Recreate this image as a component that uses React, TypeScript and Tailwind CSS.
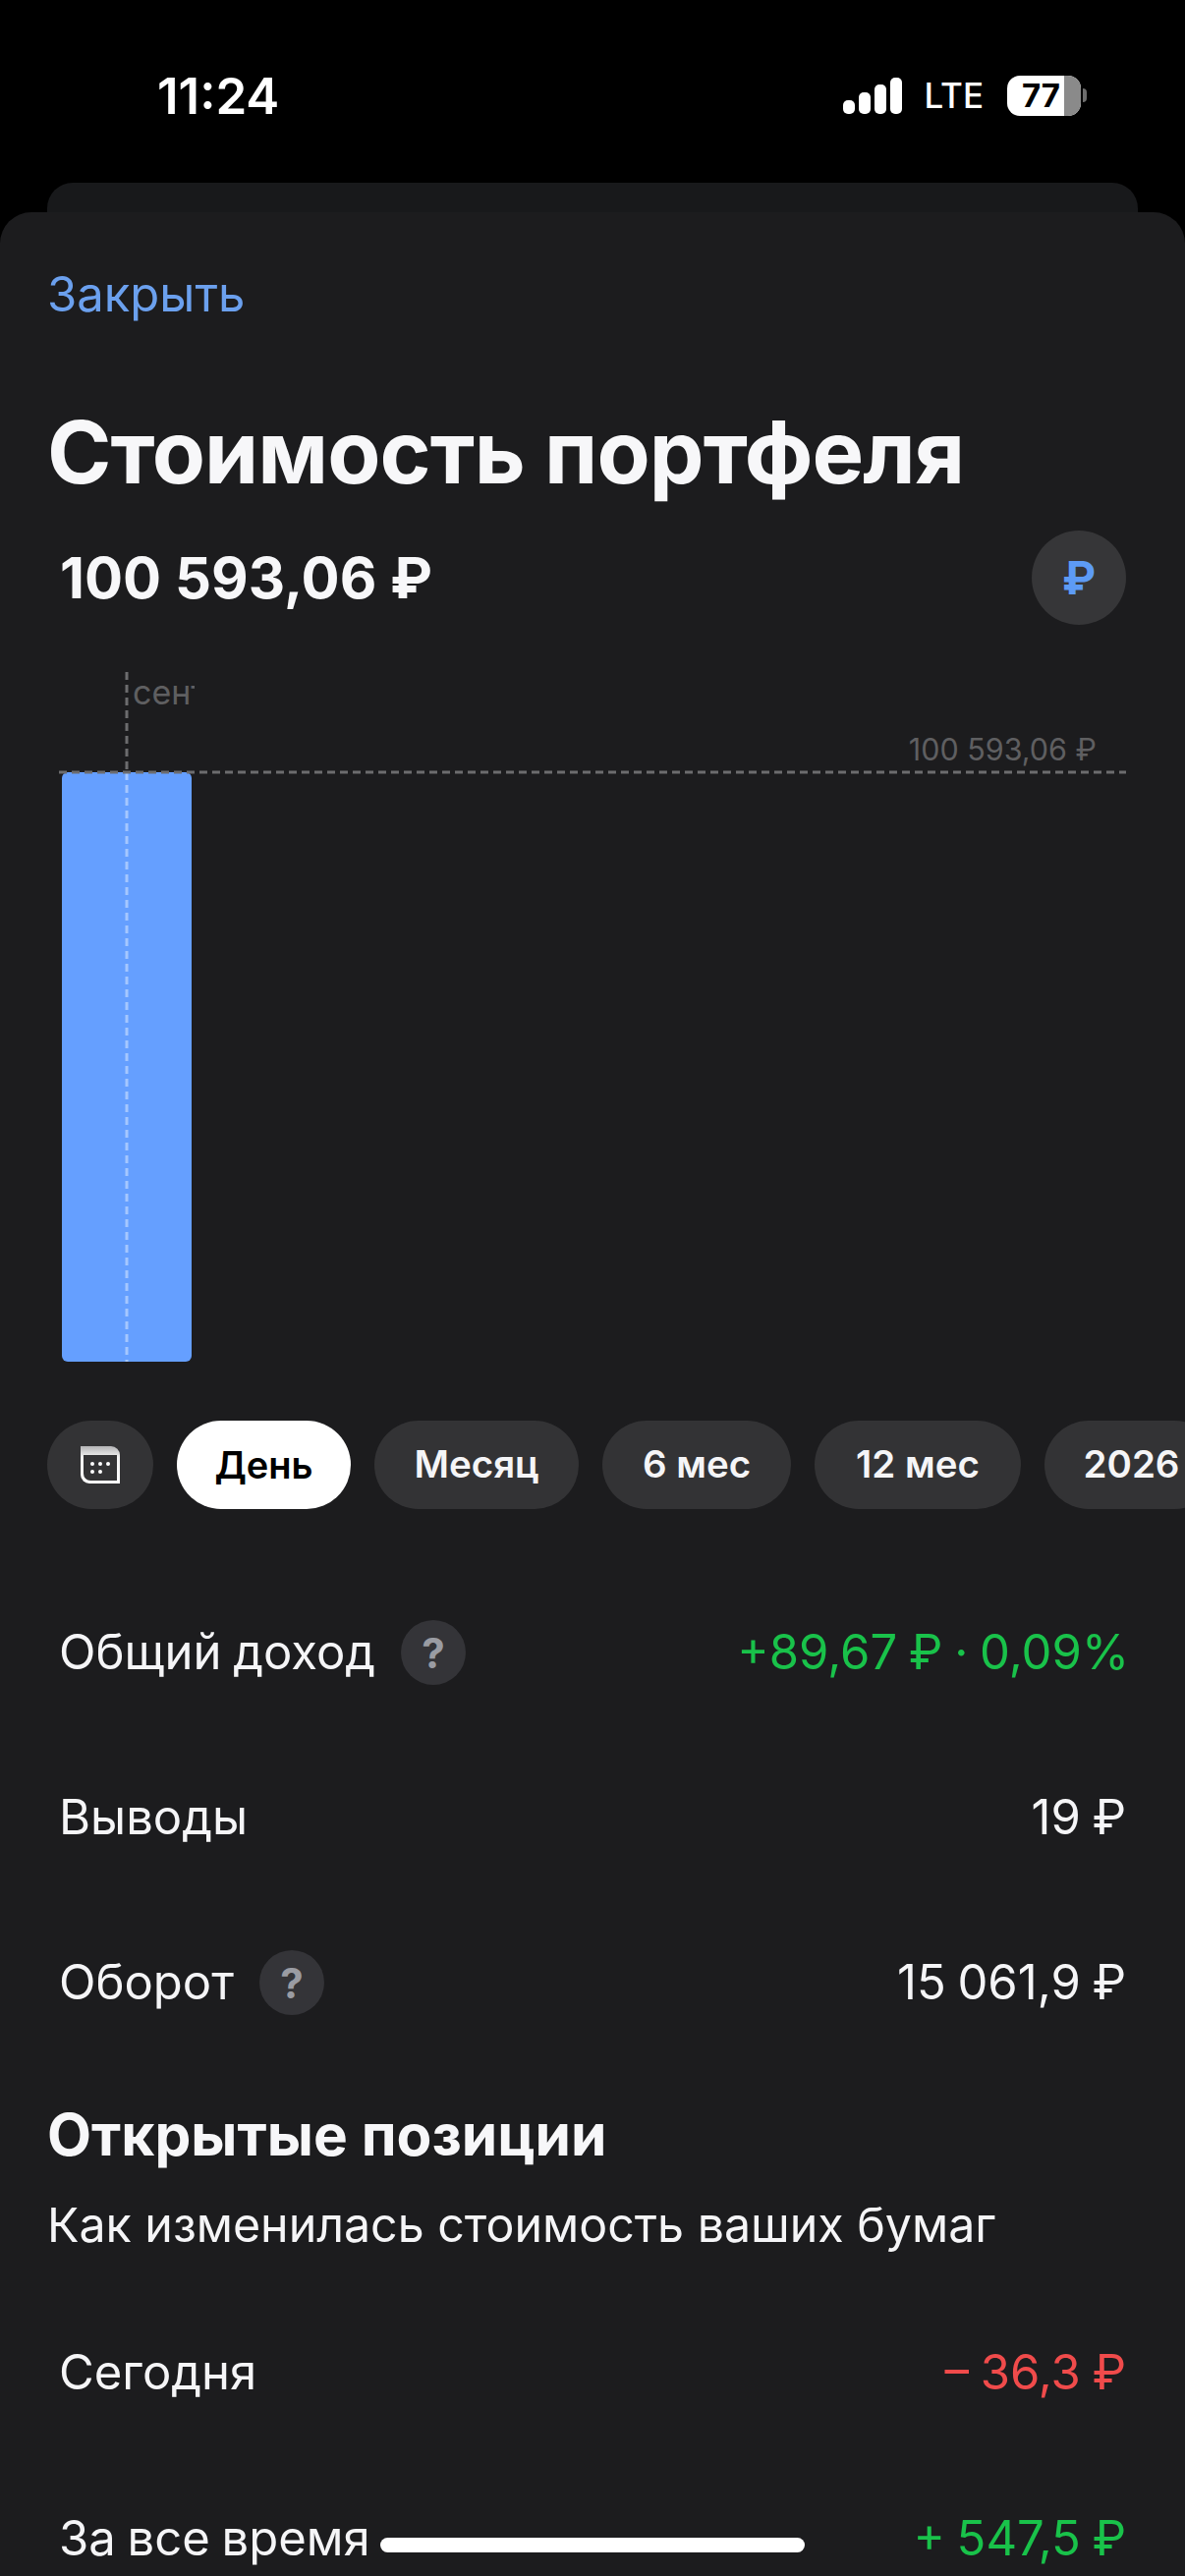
import React from 'react';

const pills = [
  { label: 'Месяц', width: 'w-[208px]' },
  { label: '6 мес', width: 'w-[192px]' },
  { label: '12 мес', width: 'w-[210px]' },
  { label: '2026', width: 'w-[177px]' },
];

const CalendarIcon = () => (
  <svg width="40" height="38" viewBox="0 0 40 38">
    <defs>
      <linearGradient id="calTop" x1="0" y1="0" x2="0" y2="1">
        <stop offset="0" stopColor="#b4b4b6" />
        <stop offset="0.3" stopColor="#f2f2f2" />
        <stop offset="1" stopColor="#ffffff" />
      </linearGradient>
    </defs>
    <path d="M0 0h31a9 9 0 0 1 9 9v29H9a9 9 0 0 1-9-9z" fill="url(#calTop)" />
    <path d="M3 9h34v26H10a7 7 0 0 1-7-7z" fill="#333335" />
    <circle cx="12" cy="18" r="2" fill="#fff" />
    <circle cx="20" cy="18" r="2" fill="#fff" />
    <circle cx="28" cy="18" r="2" fill="#fff" />
    <circle cx="12" cy="26" r="2" fill="#fff" />
    <circle cx="20" cy="26" r="2" fill="#fff" />
  </svg>
);

const Help = () => (
  <span className="flex h-[66px] w-[66px] items-center justify-center rounded-full bg-[#343438] text-[42px] font-bold text-[#9a9ca3]">?</span>
);

const Row = ({ label, value, help, color, className }: { label: string; value: string; help?: boolean; color?: string; className: string }) => (
  <div className={`flex items-center justify-between pl-[12px] pr-[12px] [word-spacing:-2px] ${className}`}>
    <div className="flex items-center gap-[26px]">
      <span className="text-[49px] leading-[66px] text-[#f5f5f7]">{label}</span>
      {help && <Help />}
    </div>
    <span className={`text-[49px] leading-[66px] ${color ?? 'text-[#f5f5f7]'}`}>{value}</span>
  </div>
);

const Chart = () => (
  <div className="relative mt-[48px] h-[702px]">
    <div className="absolute left-[15px] top-[102px] h-[600px] w-[132px] rounded-[6px] bg-[#659fff]" />
    <svg className="absolute inset-0 -ml-[48px]" width="1206" height="702">
      <line x1="129" y1="0" x2="129" y2="102" stroke="#6c6c6e" strokeWidth="3" strokeDasharray="8 5" />
      <line x1="129" y1="102" x2="129" y2="702" stroke="#a5c7ff" strokeWidth="3" strokeDasharray="8 5" />
      <line x1="60" y1="102" x2="1146" y2="102" stroke="#6c6c6e" strokeWidth="3" strokeDasharray="8 5" />
    </svg>
    <div className="absolute left-[87px] top-[2px] w-[63px] overflow-hidden whitespace-nowrap text-[34px] leading-[38px] text-[#5f5f61]">сентябрь</div>
    <div className="absolute right-[42px] top-[60px] text-[30.5px] leading-[38px] text-[#5f5f61]">100 593,06 ₽</div>
  </div>
);

export default function App() {
  return (
    <div className="relative h-[2622px] w-[1206px] overflow-hidden bg-black font-['Inter',sans-serif]">
      {/* status bar */}
      <div className="flex h-[186px] items-start justify-between pl-[160px] pr-[100px] pt-[68px] text-white">
        <span className="text-[51px] font-semibold leading-[60px]">11:24</span>
        <div className="flex items-center gap-[23px] pt-[7px]">
          <svg width="60" height="37" viewBox="0 0 60 37" fill="#fff">
            <rect x="0" y="23" width="12" height="14" rx="5" />
            <rect x="16" y="15" width="12" height="22" rx="5" />
            <rect x="32" y="7" width="12" height="30" rx="5" />
            <rect x="48" y="0" width="12" height="37" rx="5" />
          </svg>
          <span className="mr-px text-[35px] font-medium leading-[44px]">LTE</span>
          <div className="flex items-center gap-[2px]">
            <div className="relative h-[41px] w-[75px] overflow-hidden rounded-[13px] bg-white">
              <div className="absolute inset-y-0 right-0 w-[17px] bg-[#8a8a8a]" />
              <span className="absolute left-[15px] top-0 text-[33px] font-bold leading-[41px] text-black">77</span>
            </div>
            <div className="h-[14px] w-[4px] rounded-r-full bg-[#6d6d6d]" />
          </div>
        </div>
      </div>

      <div className="mx-[48px] h-[30px] rounded-t-[26px] bg-[#18191b]" />

      <div className="h-[2406px] rounded-t-[32px] bg-[#1c1c1e] px-[48px]">
        <div className="pt-[54px] text-[49px] leading-[60px] text-[#6ba0ee]">Закрыть</div>
        <h1 className="mt-[80px] text-[88.5px] font-bold leading-[100px] tracking-[-0.9px] text-[#f7f7f9]">Стоимость портфеля</h1>

        <div className="mt-[30px] flex items-center justify-between pl-[13px] pr-[12px]">
          <span className="text-[58px] font-bold leading-[96px] text-[#f7f7f9]">100 593,06 ₽</span>
          <span className="flex h-[96px] w-[96px] items-center justify-center rounded-full bg-[#363638] text-[46px] font-bold text-[#5d9bf5]">₽</span>
        </div>

        <Chart />

        <div className="-mr-[48px] mt-[60px] flex gap-[24px] overflow-hidden">
          <div className="flex h-[90px] w-[108px] shrink-0 items-center justify-center rounded-full bg-[#333335]">
            <CalendarIcon />
          </div>
          <div className="flex h-[90px] w-[177px] shrink-0 items-center justify-center rounded-full bg-white text-[38px] font-semibold text-black">День</div>
          {pills.map((p) => (
            <div key={p.label} className={`flex h-[90px] shrink-0 items-center justify-center rounded-full bg-[#333335] text-[38.5px] font-semibold text-[#f5f5f7] ${p.width}`}>
              {p.label}
            </div>
          ))}
        </div>

        <Row className="mt-[113px] -mr-[3px]" label="Общий доход" help value="+89,67 ₽ · 0,09%" color="text-[#19c24a]" />
        <Row className="mt-[102px]" label="Выводы" value="19 ₽" />
        <Row className="mt-[102px]" label="Оборот" help value="15 061,9 ₽" />

        <h2 className="mt-[87px] text-[58.5px] font-bold leading-[70px] text-[#f7f7f9]">Открытые позиции</h2>
        <p className="mt-[27px] text-[48.3px] leading-[60px] text-[#f5f5f7]">Как изменилась стоимость ваших бумаг</p>

        <Row className="mt-[87px]" label="Сегодня" value="– 36,3 ₽" color="text-[#f04b4b]" />
        <Row className="mt-[103px]" label="За все время" value="+ 547,5 ₽" color="text-[#19c24a]" />
      </div>

      {/* home indicator */}
      <div className="absolute left-[387px] top-[2583px] h-[15px] w-[432px] rounded-full bg-white" />
    </div>
  );
}
